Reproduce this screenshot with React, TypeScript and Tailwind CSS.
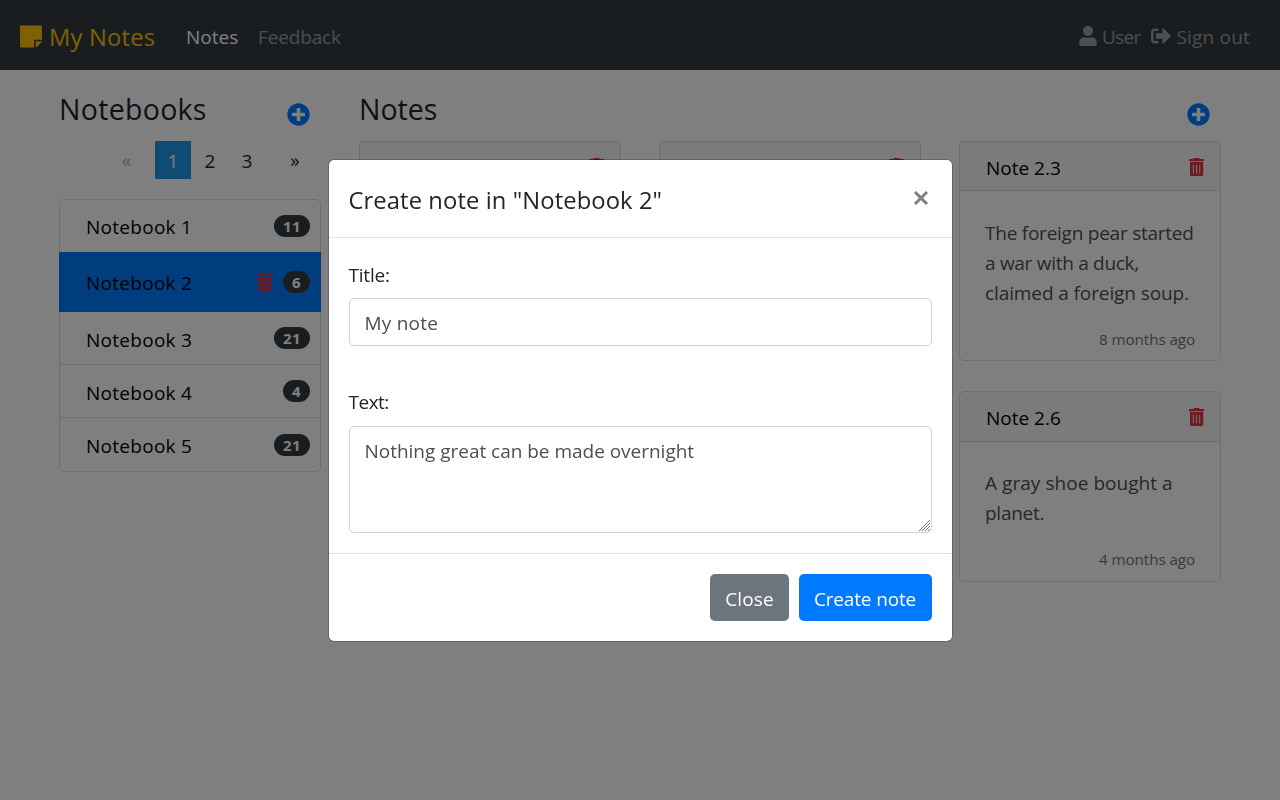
import type { ReactNode } from 'react';
import { FaPlusCircle, FaSignOutAlt, FaStickyNote, FaUser } from 'react-icons/fa';

function TrashIcon() {
  return (
    <svg viewBox="0 0 15 18" className="block h-[18px] w-[15px] shrink-0 text-[#dc3545]" fill="currentColor" fillRule="evenodd">
      <path d="M5 0h5l.8 1H14.6a.4.4 0 0 1 .4.4V3.300H0V1.400a.4.400 0 0 1 .4-.4H4.200z M1 3.900h13.200v12.600a1.500 1.500 0 0 1-1.500 1.500h-10.200a1.500 1.500 0 0 1-1.500-1.500z M3.900 6.800v8.800h.9V6.800z M7.100 6.800v8.800h.9V6.800z M10.300 6.800v8.800h.9V6.800z" />
    </svg>
  );
}

function Badge({ children }: { children: ReactNode }) {
  return (
    <span className="flex h-[22px] shrink-0 items-center rounded-full bg-[#343a40] px-[9px] text-[15px] leading-[22px] font-bold tracking-[0.4px] text-white">
      {children}
    </span>
  );
}

const notebooks = [
  { name: 'Notebook 1', count: 11, row: 'h-[52px]', label: 'pt-[2px]' },
  { name: 'Notebook 2', count: 6, active: true, row: 'h-[60px] bg-[#007bff]', label: 'pt-[2px]' },
  { name: 'Notebook 3', count: 21, row: 'h-[53px] border-b border-black/[.125]', label: 'pt-[4px]' },
  { name: 'Notebook 4', count: 4, row: 'h-[53px] border-b border-black/[.125]', label: 'pt-[4px]' },
  { name: 'Notebook 5', count: 21, row: 'h-[53px]', label: 'pt-[2px]' },
];

function NotebookList() {
  return (
    <ul className="mt-[20px] rounded-[5px] border border-black/[.125]">
      {notebooks.map((n) => (
        <li
          key={n.name}
          className={`${n.active ? '-mx-px pr-[11px] pl-[27px]' : 'pr-[10px] pl-[26px]'} flex items-center ${n.row}`}
        >
          <span className={`leading-[24px] tracking-[0.28px] text-black ${n.label}`}>{n.name}</span>
          <div className="ml-auto flex items-center gap-[11px]">
            {n.active && <TrashIcon />}
            <Badge>{n.count}</Badge>
          </div>
        </li>
      ))}
    </ul>
  );
}

interface Note {
  title: string;
  lines: { text: string; tracking: string }[];
  age: string;
  header: string;
  body: string;
  footer: string;
}

const notes: Note[] = [
  { title: 'Note 2.1', lines: [], age: '', header: 'h-[49px]', body: 'pt-[27px]', footer: 'pb-[9px]' },
  { title: 'Note 2.2', lines: [], age: '', header: 'h-[49px]', body: 'pt-[27px]', footer: 'pb-[9px]' },
  {
    title: 'Note 2.3',
    lines: [
      { text: 'The foreign pear started', tracking: 'tracking-[-0.24px]' },
      { text: 'a war with a duck,', tracking: 'tracking-[-0.29px]' },
      { text: 'claimed a foreign soup.', tracking: 'tracking-[-0.1px]' },
    ],
    age: '8 months ago',
    header: 'h-[49px]',
    body: 'pt-[27px]',
    footer: 'pb-[9px]',
  },
  {
    title: 'Note 2.6',
    lines: [
      { text: 'A gray shoe bought a', tracking: 'tracking-[0.05px]' },
      { text: 'planet.', tracking: 'tracking-[-0.26px]' },
    ],
    age: '4 months ago',
    header: 'h-[50px]',
    body: 'pt-[26px]',
    footer: 'pb-[10px]',
  },
];

function NoteCard({ note, className = '' }: { note: Note; className?: string }) {
  return (
    <article className={`flex flex-col rounded-[5px] border border-black/[.125] ${className}`}>
      <header className={`flex shrink-0 items-start justify-between border-b border-black/[.125] bg-black/[.03] pr-[16px] pl-[26px] ${note.header}`}>
        <span className="pt-[14px] leading-[24px] text-black">{note.title}</span>
        <div className="pt-[16px]">
          <TrashIcon />
        </div>
      </header>
      <p className={`pl-[25px] leading-[30px] text-[#495057] ${note.body}`}>
        {note.lines.map((l) => (
          <span key={l.text} className={`block whitespace-nowrap ${l.tracking}`}>
            {l.text}
          </span>
        ))}
      </p>
      <span className={`mt-auto pr-[25px] text-right text-[15.2px] leading-[24px] tracking-[-0.08px] text-[#6c757d] ${note.footer}`}>
        {note.age}
      </span>
    </article>
  );
}

function Navbar() {
  return (
    <nav className="flex h-[70px] items-center bg-[#343a40] pt-1 pr-[30px] pl-[20px]">
      <div className="flex w-[166px] items-center gap-[7px] text-[#ffc107]">
        <FaStickyNote className="-mt-[2px] h-[25px] w-[22px]" />
        <span className="text-[23.75px] leading-[36px] tracking-[0.2px]">My Notes</span>
      </div>
      <span className="w-[72px] text-white">Notes</span>
      <span className="tracking-[-0.15px] text-white/50">Feedback</span>
      <div className="ml-auto flex items-center text-white/50">
        <FaUser className="-mt-[2px] mr-[5px] h-[20px] w-[18px]" />
        <span className="tracking-[-0.7px]">User</span>
        <FaSignOutAlt className="-mt-[2px] mr-[6px] ml-[10px] size-[20px]" />
        <span className="tracking-[0.19px]">Sign out</span>
      </div>
    </nav>
  );
}

function CreateNoteModal() {
  return (
    <div className="fixed inset-0 flex items-start justify-center bg-black/50 pt-[159px]">
      <div role="dialog" className="flex h-[483px] w-[625px] flex-col rounded-[6px] border border-black/20 bg-white bg-clip-padding text-[#212529]">
        <header className="flex h-[78px] shrink-0 items-start justify-between border-b border-[#dee2e6] pr-[22px] pl-[20px]">
          <h5 className="pt-[22px] text-[23.75px] leading-[36px] tracking-[0.1px]">Create note in "Notebook 2"</h5>
          <button aria-label="Close dialog" className="mt-[29px] p-px">
            <svg viewBox="0 0 16 16" className="block size-[16px] text-[#7f7f7f]" fill="none" stroke="currentColor" strokeWidth="3">
              <path d="M2 2l12 12M14 2L2 14" />
            </svg>
          </button>
        </header>
        <div className="flex flex-1 flex-col px-[20px] pt-[22px]">
          <label className="leading-[30px] tracking-[-0.2px]">Title:</label>
          <input
            className="mt-[8px] h-[48px] rounded-[5px] border border-[#ced4da] bg-white px-[15px] pt-[2px] tracking-[0.23px] text-[#495057] outline-none"
            defaultValue="My note"
          />
          <label className="mt-[41px] leading-[30px] tracking-[-0.5px]">Text:</label>
          <div className="relative mt-[9px]">
            <textarea
              className="block h-[107px] w-full resize-none rounded-[5px] border border-[#ced4da] bg-white px-[15px] py-[9px] leading-[30px] tracking-[-0.02px] text-[#495057] outline-none"
              defaultValue="Nothing great can be made overnight"
            />
            <svg viewBox="0 0 11 11" className="pointer-events-none absolute right-[2px] bottom-[2px] size-[11px] text-[#777]" fill="none" stroke="currentColor">
              <path d="M0 11L11 0M3 11L11 3M6 11L11 6M9 11L11 9" />
            </svg>
          </div>
        </div>
        <footer className="flex h-[88px] shrink-0 items-start justify-end gap-[10px] border-t border-[#dee2e6] pt-[20px] pr-[20px]">
          <button className="h-[47px] w-[79px] rounded-[5px] bg-[#6c757d] pt-[2px] pl-px tracking-[0.1px] text-white">Close</button>
          <button className="h-[47px] w-[133px] rounded-[5px] bg-[#007bff] pt-[2px] tracking-[-0.15px] whitespace-nowrap text-white">
            Create note
          </button>
        </footer>
      </div>
    </div>
  );
}

export default function App() {
  return (
    <div className="h-screen overflow-hidden bg-white font-['Open_Sans',sans-serif] text-[19px] leading-[30px] text-[#212529]">
      <Navbar />
      <main className="flex gap-[38px] pl-[59px]">
        <section className="w-[262px] shrink-0">
          <div className="flex h-[71px] items-start justify-between pr-[11px]">
            <h3 className="pt-[21px] text-[28.5px] leading-[36px] tracking-[0.3px]">Notebooks</h3>
            <FaPlusCircle className="mt-[32.5px] size-[23px] text-[#007bff]" />
          </div>
          <div className="flex h-[38px] items-center pl-[49px] text-center">
            <span className="w-[37px] text-[#adb5bd]">«</span>
            <span className="ml-[10px] w-[36px] bg-[#2196e3] pt-[5px] pb-[3px] text-white">1</span>
            <span className="w-[38px] pt-[2px]">2</span>
            <span className="w-[36px] pt-[2px]">3</span>
            <span className="ml-[11px] w-[38px]">»</span>
          </div>
          <NotebookList />
        </section>
        <section className="w-[862px] shrink-0">
          <div className="flex h-[71px] items-start justify-between pr-[11px]">
            <h3 className="pt-[21px] text-[28.5px] leading-[36px]">Notes</h3>
            <FaPlusCircle className="mt-[32.5px] size-[23px] text-[#007bff]" />
          </div>
          <div className="grid grid-cols-3 gap-x-[38px] gap-y-[30px]">
            <NoteCard note={notes[0]} />
            <NoteCard note={notes[1]} />
            <NoteCard note={notes[2]} className="h-[220px]" />
            <NoteCard note={notes[3]} className="col-start-3 h-[191px]" />
          </div>
        </section>
      </main>
      <CreateNoteModal />
    </div>
  );
}
